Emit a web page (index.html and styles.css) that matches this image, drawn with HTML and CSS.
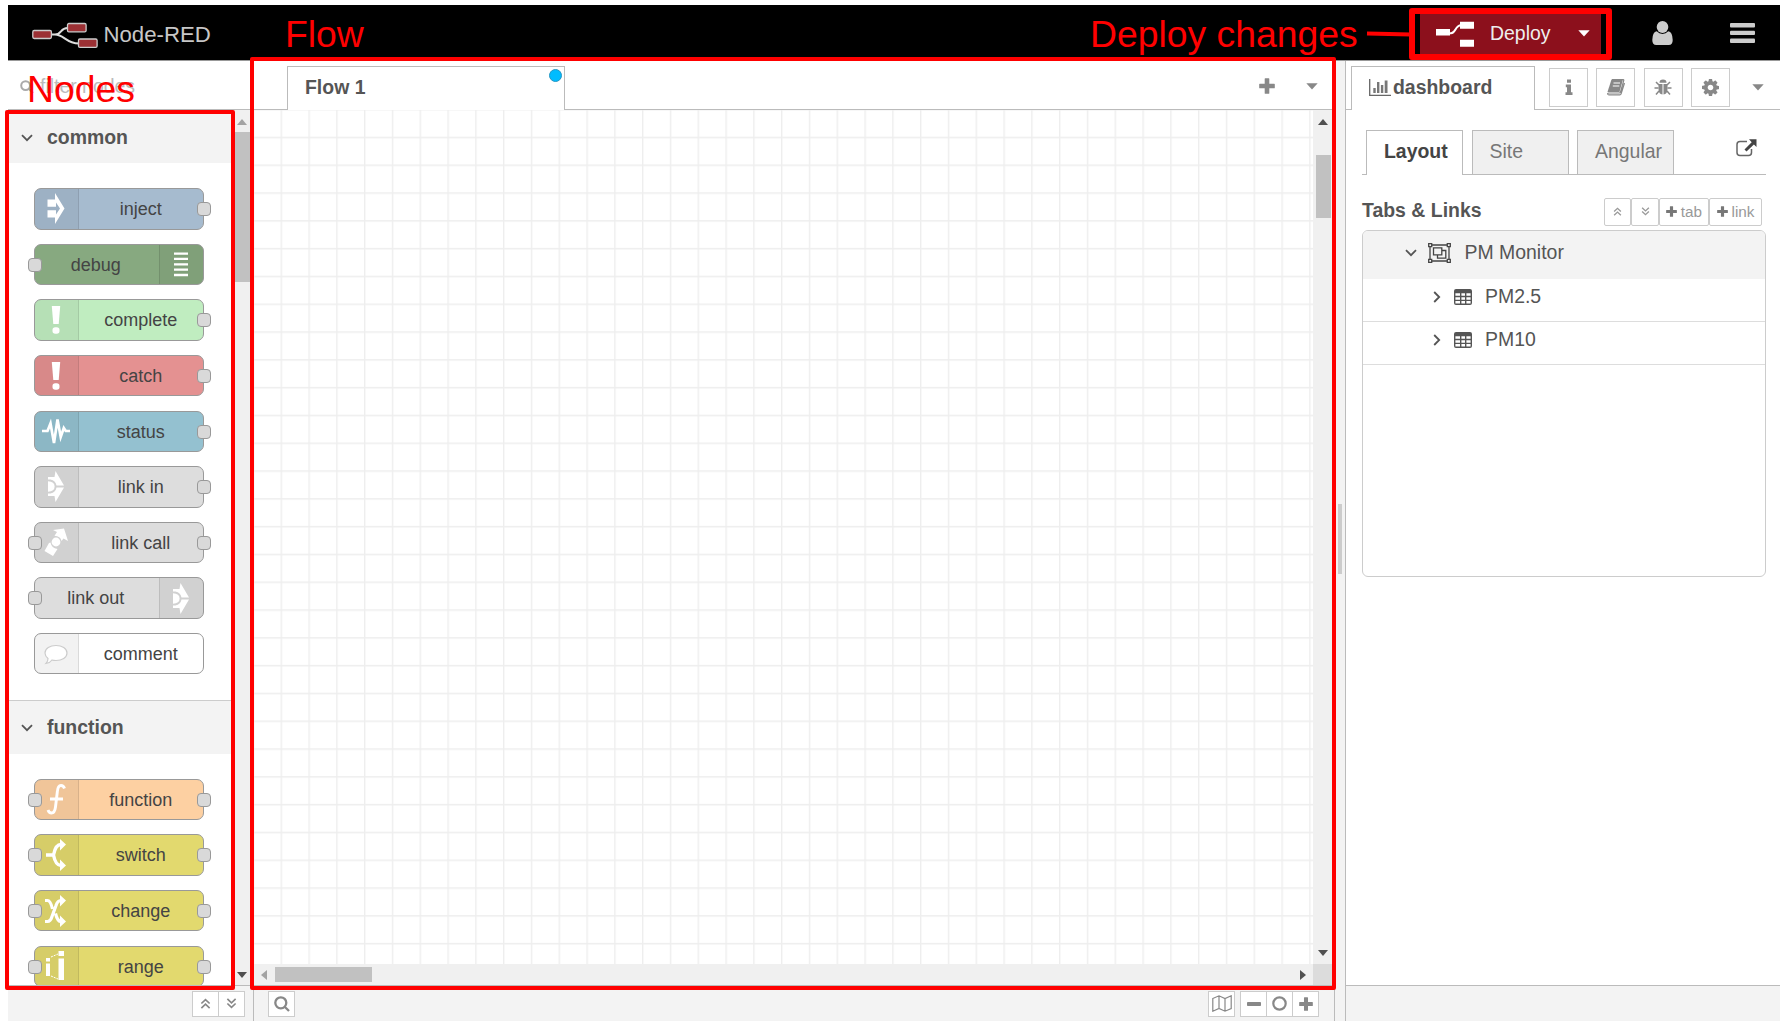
FILE: index.html
```html
<!DOCTYPE html>
<html lang="en">
<head>
<meta charset="utf-8">
<title>Node-RED</title>
<link rel="stylesheet" href="styles.css">
</head>
<body>
<svg class="defs" width="0" height="0" aria-hidden="true">
  <symbol id="down" viewBox="0 0 12 8"><path d="M1 1.2l5 5 5-5" fill="none" stroke="currentColor" stroke-width="1.8"/></symbol>
  <symbol id="right" viewBox="0 0 8 12"><path d="M1.2 1l5 5-5 5" fill="none" stroke="currentColor" stroke-width="1.8"/></symbol>
  <symbol id="up2" viewBox="0 0 12 12"><path d="M1.5 6L6 1.8 10.500 6M1.500 11L6 6.800 10.500 11" fill="none" stroke="currentColor" stroke-width="1.800"/></symbol>
  <symbol id="down2" viewBox="0 0 12 12"><path d="M1.500 1L6 5.200 10.500 1M1.500 6L6 10.200 10.500 6" fill="none" stroke="currentColor" stroke-width="1.800"/></symbol>
  <symbol id="plus" viewBox="0 0 16 16"><path d="M5.700.8q0-.6.6-.6h3.400q.6 0 .6.600v4.900h4.900q.6 0 .6.600v3.400q0 .6-.6.600h-4.900v4.900q0 .6-.6.600H6.300q-.6 0-.6-.6v-4.900H.8q-.6 0-.6-.6V6.300q0-.6.6-.6h4.900z" fill="currentColor"/></symbol>
  <symbol id="caret" viewBox="0 0 12 7"><path d="M.3.300h11.400L6 6.600z" fill="currentColor"/></symbol>
  <symbol id="table" viewBox="0 0 18 16"><path d="M2 0h14q2 0 2 2v12q0 2-2 2H2q-2 0-2-2V2q0-2 2-2zM1.400 4.300v2.500H6V4.300zm6 0v2.500H11V4.300zm5 0v2.500h4.200V4.300zM1.400 8.200v2.500H6V8.200zm6 0v2.500H11V8.200zm5 0v2.500h4.200V8.200zM1.400 12v2.500H6V12zm6 0v2.500H11V12zm5 0v2.500h4.200V12z" fill="currentColor" fill-rule="evenodd"/></symbol>
  <symbol id="bang" viewBox="0 0 10 30"><path d="M.8 1h8.400L7.700 19H2.300z" fill="#fff"/><rect x="1.500" y="22.300" width="7" height="6.500" rx="2.800" fill="#fff"/></symbol>
  <symbol id="link" viewBox="0 0 18 31"><path d="M8.500 0L17 14.600H9.500Q8.500 9.500 3.500 8.500H1V6h6.500zM17 16.400L8.500 31l-1-6H1v-2.500h2.500q5-1 6-6.100z" fill="#fff"/><path d="M1 10.200q6.600.300 6.600 5.300T1 20.800z" fill="#fff"/></symbol>
</svg>

<div class="app">
  <header class="topbar">
    <svg class="logo" width="68" height="28" viewBox="0 0 68 28">
      <path d="M20 12.500h3C30 12.500 28 6 35.500 6M23 12.500C32 12.500 34 21.500 47 21.500" fill="none" stroke="#ddd" stroke-width="2"/>
      <g fill="#9c3034" stroke="#ccc" stroke-width="1.300"><rect x=".8" y="8.500" width="18.600" height="8" rx="1.400"/><rect x="35.500" y="1.500" width="18.600" height="8.300" rx="1.400"/><rect x="46.500" y="17" width="18.600" height="8.300" rx="1.400"/></g>
    </svg>
    <span class="brand">Node-RED</span>
    <div class="deploy">
      <svg width="38" height="26" viewBox="0 0 38 26" fill="#fff"><path d="M0 8h14v6.600H0zM24 .7h14v7H24zM24 18.700h14v7H24z"/><path d="M13 12.200h2C20 12.200 19 4.200 25 4.200" fill="none" stroke="#fff" stroke-width="2"/></svg>
      <span>Deploy</span>
      <svg class="deploy-caret" width="12" height="7"><use href="#caret"/></svg>
    </div>
    <svg class="user" width="21" height="24" viewBox="0 0 21 24" fill="#ccc"><ellipse cx="10.500" cy="6" rx="5.800" ry="5.900"/><path d="M4.700 10.300q2.500 2.600 5.800 2.600t5.800-2.600Q20.500 11 20.700 19q0 5-4 5H4.300q-4 0-4-5 .2-8 4.400-8.700z"/></svg>
    <svg class="bars" width="25" height="21" viewBox="0 0 25 21" fill="#ccc"><rect width="25" height="4.400" rx="1"/><rect y="7.700" width="25" height="4.400" rx="1"/><rect y="15.500" width="25" height="4.400" rx="1"/></svg>
  </header>

  <main class="main">
    <aside class="palette">
      <div class="filter"><svg width="14" height="14" viewBox="0 0 14 14"><circle cx="5.600" cy="5.600" r="4.400" fill="none" stroke="#aaa" stroke-width="2"/><path d="M9 9l4 4" stroke="#aaa" stroke-width="2"/></svg><span>filter nodes</span></div>
      <div class="palette-body">
        <div class="palette-list">
          <div class="category"><svg width="12" height="8"><use href="#down"/></svg>common</div>
          <div class="nodes">
            <div class="node inject"><i class="ico"><svg width="18" height="31" viewBox="0 0 18 31"><path d="M8 0l9.500 15.500L8 31v-6.500H.5v-7.300H9v4.300l4-6-4-6v4.300H.5V6.500H8z" fill="#fff"/></svg></i><span>inject</span><b class="port out"></b></div>
            <div class="node debug flip"><i class="ico"><svg width="14" height="26" viewBox="0 0 14 26"><path d="M0 1.700h14M0 6.900h14M0 12.300h14M0 17.600h14M0 23h14" stroke="#fff" stroke-width="2.300"/></svg></i><span>debug</span><b class="port in"></b></div>
            <div class="node complete"><i class="ico"><svg width="10" height="30"><use href="#bang"/></svg></i><span>complete</span><b class="port out"></b></div>
            <div class="node catch"><i class="ico"><svg width="10" height="30"><use href="#bang"/></svg></i><span>catch</span><b class="port out"></b></div>
            <div class="node status"><i class="ico"><svg width="28" height="34" viewBox="0 0 28 34"><path d="M0 17h5.500l3-7.500L12 29l3.500-23.500L18.700 23l3.100-9 2 3H28" fill="none" stroke="#fff" stroke-width="2.700"/></svg></i><span>status</span><b class="port out"></b></div>
            <div class="node link"><i class="ico"><svg width="18" height="31"><use href="#link"/></svg></i><span>link in</span><b class="port out"></b></div>
            <div class="node link"><i class="ico"><svg width="26" height="30" viewBox="0 0 26 30"><path d="M10 3L21 1.500 25 14l-4.500-2.500-2 2.500q-1-5-7-5.300L14 5zM7.500 15.500q1 5.500 7 6.500L10 29 1.500 24 6 16z" fill="#fff"/><circle cx="13" cy="15" r="4.400" fill="#fff"/></svg></i><span>link call</span><b class="port in"></b><b class="port out"></b></div>
            <div class="node link flip"><i class="ico"><svg width="18" height="31"><use href="#link"/></svg></i><span>link out</span><b class="port in"></b></div>
            <div class="node comment"><i class="ico"><svg width="24" height="22" viewBox="0 0 24 22"><path d="M12 2.500c6 0 11 3 11 7.500s-5 7.500-11 7.500q-2.500 0-4-.5-2 3-6 3.500 2-2 2-5Q1 13 1 10C1 5.500 6 2.500 12 2.500z" fill="#fff" stroke="#ccc" stroke-width="1.200"/></svg></i><span>comment</span></div>
          </div>
          <div class="category second"><svg width="12" height="8"><use href="#down"/></svg>function</div>
          <div class="nodes">
            <div class="node function"><i class="ico"><svg width="20" height="31" viewBox="0 0 20 31"><path d="M18.500 4.500q-1-3-3.500-3-3.200 0-3.700 6.500L9.500 23q-.8 6-4 6Q3 29 2 26M4 15h13" fill="none" stroke="#fff" stroke-width="2.900"/></svg></i><span>function</span><b class="port in"></b><b class="port out"></b></div>
            <div class="node rule"><i class="ico"><svg width="22" height="32" viewBox="0 0 22 32"><path d="M1 16h8M8.500 16Q10.500 5.500 16 5.500M8.500 16q2 10.500 7.500 10.500" fill="none" stroke="#fff" stroke-width="3.400"/><path d="M15 0l6 5.500-6 6zM15 20.500l6 6-6 5.500z" fill="#fff"/></svg></i><span>switch</span><b class="port in"></b><b class="port out"></b></div>
            <div class="node rule"><i class="ico"><svg width="22" height="32" viewBox="0 0 22 32"><path d="M0 5.500h2.500q3 0 5 8.500M0 26.500h2.500q3 0 4.500-5l4-11q1.500-5 5-5M10.500 18.500q2 8 5.500 8" fill="none" stroke="#fff" stroke-width="3.200"/><path d="M15 0l6 5.500-6 6zM15 20.500l6 6-6 5.500z" fill="#fff"/></svg></i><span>change</span><b class="port in"></b><b class="port out"></b></div>
            <div class="node rule"><i class="ico"><svg width="19" height="30" viewBox="0 0 19 30"><path d="M0 7h4v3.500H0zM0 12.500h4V25H0zM12.500 0H18v5h-5.500zM12.500 7.500H18V29h-5.500z" fill="#fff"/><path d="M5 6l7-3M5 25l7 3" stroke="#fff" stroke-width="1" stroke-dasharray="2 1"/></svg></i><span>range</span><b class="port in"></b><b class="port out"></b></div>
          </div>
        </div>
        <div class="vscroll pale"><svg class="tri" width="10" height="6" viewBox="0 0 10 6"><path d="M0 6l5-6 5 6z" fill="#a3a3a3"/></svg><div class="thumb"></div><svg class="tri end" width="10" height="6" viewBox="0 0 10 6"><path d="M0 0h10L5 6z" fill="#505050"/></svg></div>
      </div>
      <footer class="foot palette-foot"><div class="btns"><button><svg width="11" height="11"><use href="#up2"/></svg></button><button><svg width="11" height="11"><use href="#down2"/></svg></button></div></footer>
    </aside>

    <section class="workspace">
      <div class="tabbar">
        <div class="lead"></div>
        <div class="flowtab">Flow 1<span class="dot"></span></div>
        <div class="rest"><svg width="16" height="16"><use href="#plus"/></svg><svg width="12" height="7"><use href="#caret"/></svg></div>
      </div>
      <div class="canvas-row">
        <svg class="grid" width="1059" height="854"><defs><pattern id="g" x="-1.200" y="-1.100" width="27.800" height="27.800" patternUnits="userSpaceOnUse"><path d="M.7 0v27.800M0 .7h27.800" stroke="#eee" stroke-width="1.390"/></pattern></defs><rect width="1059" height="854" fill="url(#g)"/></svg>
        <div class="vscroll flow-v"><svg class="tri" width="10" height="6" viewBox="0 0 10 6"><path d="M0 6l5-6 5 6z" fill="#505050"/></svg><div class="thumb"></div><svg class="tri end" width="10" height="6" viewBox="0 0 10 6"><path d="M0 0h10L5 6z" fill="#505050"/></svg></div>
      </div>
      <div class="hscroll"><div class="htrack"><svg width="6" height="10" viewBox="0 0 6 10"><path d="M6 0v10L0 5z" fill="#a3a3a3"/></svg><div class="hthumb"></div><svg class="hend" width="6" height="10" viewBox="0 0 6 10"><path d="M0 0v10l6-5z" fill="#505050"/></svg></div><div class="corner"></div></div>
      <footer class="foot flow-foot">
        <div class="btns"><button><svg width="16" height="16" viewBox="0 0 16 16" fill="none" stroke="currentColor" stroke-width="2.300"><circle cx="6.800" cy="6.800" r="5.500"/><path d="M10.700 10.700l4.300 4.300"/></svg></button></div>
        <div class="btns map"><button><svg width="20" height="17" viewBox="0 0 20 17" fill="none" stroke="currentColor" stroke-width="1.200"><path d="M.8 3.500L7 .8l6 2.700L19.200.8v12.700L13 16.200l-6-2.700-6.200 2.700zM7 .8v12.700M13 3.500v12.700"/></svg></button></div>
        <div class="btns"><button><svg width="14" height="4"><rect width="14" height="4" rx=".8" fill="currentColor"/></svg></button><button><svg width="15" height="15" viewBox="0 0 15 15"><circle cx="7.500" cy="7.500" r="6.200" fill="none" stroke="currentColor" stroke-width="2.200"/></svg></button><button><svg width="14" height="14"><use href="#plus"/></svg></button></div>
      </footer>
    </section>

    <div class="separator"><div class="grip"></div></div>

    <aside class="sidebar">
      <div class="tabbar">
        <div class="side-lead"></div>
        <div class="sidetab"><svg width="22" height="17" viewBox="0 0 22 17"><path d="M.7 0v16.300H22" fill="none" stroke="#666" stroke-width="1.300"/><path d="M4.300 9h2.400v5H4.300zM8 3h2.400v11H8zM11.900 6h2.400v8h-2.400zM15.700 1.500h2.800V14h-2.800z" fill="#777"/></svg><span>dashboard</span></div>
        <div class="side-rest">
          <button><svg width="8" height="16" viewBox="0 0 8 16" fill="currentColor"><path d="M2 .5h4v3.300H2zM.8 5.500H6v7.800h1.500V16H.5v-2.700H2V8.200H.8z"/></svg></button>
          <button><svg width="19" height="17" viewBox="0 0 19 17"><path d="M6 .5h11q1 .2.700 1.200L14.500 13q-.3 1-1.300 1H2.800q-1.500 0-1 1.300.3.500 1 .5h11q1 0 1.300-1L18.500 4" fill="none" stroke="currentColor" stroke-width="1.200"/><path d="M5.500.5H17L13.500 13H1.500z" fill="currentColor"/><path d="M7.500 4h6.500M6.800 7h6.500" stroke="#fff" stroke-width="1.100"/></svg></button>
          <button><svg width="18" height="17" viewBox="0 0 18 17"><path d="M5.500 3.800Q5.500.5 9 .5t3.500 3.300zM4.500 5h4v10.500Q4.500 15 4.500 10zM9.500 5h4v5q0 5-4 5.500z" fill="currentColor"/><path d="M2 3l3 3M16 3l-3 3M.5 9h4M13.500 9h4M5 12l-3 3.500M13 12l3 3.500" stroke="currentColor" stroke-width="1.500"/></svg></button>
          <button><svg width="17" height="17" viewBox="0 -128 1536 1536"><path fill="currentColor" d="M1024 640q0-106-75-181t-181-75-181 75-75 181 75 181 181 75 181-75 75-181zm512-109v222q0 12-8 23t-20 13l-185 28q-19 54-39 91 35 50 107 138 10 12 10 25t-9 23q-27 37-99 108t-94 71q-12 0-26-9l-138-108q-44 23-91 38-16 136-29 186-7 28-36 28h-222q-14 0-24.500-8.500t-11.500-21.500l-28-184q-49-16-90-37l-141 107q-10 9-25 9-14 0-25-11-126-114-165-168-7-10-7-23 0-12 8-23 15-21 51-66.500t54-70.500q-27-50-41-99l-183-27q-13-2-21-12.500t-8-23.500v-222q0-12 8-23t19-13l186-28q14-46 39-92-40-57-107-138-10-12-10-24 0-10 9-23 26-36 98.500-107.500t94.500-71.500q13 0 26 10l138 107q44-23 91-38 16-136 29-186 7-28 36-28h222q14 0 24.500 8.500t11.500 21.500l28 184q49 16 90 37l142-107q9-9 24-9 13 0 25 10 129 119 165 170 7 8 7 22 0 12-8 23-15 21-51 66.500t-54 70.500q26 50 41 98l183 28q13 2 21 12.500t8 23.500z"/></svg></button>
          <svg class="side-caret" width="12" height="7"><use href="#caret"/></svg>
        </div>
      </div>
      <div class="side-body">
        <div class="subtabs">
          <div class="subtab active">Layout</div><div class="subtab">Site</div><div class="subtab">Angular</div>
          <svg width="21" height="18" viewBox="0 0 21 18"><path d="M11 2.500H4Q1 2.500 1 5.500v8q0 3 3 3h8.500q3 0 3-3V10" fill="none" stroke="#666" stroke-width="1.500"/><path d="M13 .3h7.500V8l-2.600-2.600-7.400 7.200-2-2 7.200-7.400z" fill="#444"/></svg>
        </div>
        <div class="list-head"><h2>Tabs &amp; Links</h2>
          <div class="tools"><button><svg width="9" height="9"><use href="#up2"/></svg></button><button><svg width="9" height="9"><use href="#down2"/></svg></button><button class="wide"><svg width="11" height="11"><use href="#plus"/></svg>tab</button><button class="wide last"><svg width="11" height="11"><use href="#plus"/></svg>link</button></div>
        </div>
        <div class="tree">
          <div class="root"><svg width="12" height="8"><use href="#down"/></svg>
            <svg class="group" width="23" height="20" viewBox="0 0 23 20" fill="none" stroke="#444" stroke-width="1.300"><path d="M4 2h15M4 18h15M2 4v12M21 4v12M.7.700h3v3h-3zM19.300.7h3v3h-3zM.7 16.300h3v3h-3zM19.300 16.300h3v3h-3z"/><path d="M5.500 4.800h8.300v7H5.500zM13.800 7.500h4v7.700H9.500v-3.400"/></svg><span>PM Monitor</span></div>
          <div class="leaf"><svg width="8" height="12"><use href="#right"/></svg><svg class="tbl" width="18" height="16"><use href="#table"/></svg><span>PM2.5</span></div>
          <div class="leaf"><svg width="8" height="12"><use href="#right"/></svg><svg class="tbl" width="18" height="16"><use href="#table"/></svg><span>PM10</span></div>
        </div>
      </div>
      <footer class="foot"></footer>
    </aside>
  </main>
</div>

<div class="mark mark-nodes"></div>
<div class="mark mark-flow"></div>
<div class="mark mark-deploy"></div>
<div class="leader"></div>
<div class="note note-nodes">Nodes</div>
<div class="note note-flow">Flow</div>
<div class="note note-deploy">Deploy changes</div>
</body>
</html>
```

FILE: styles.css
```css
* { box-sizing: border-box; }
body { margin: 0; background: #fff; color: #555; font: 19.460px/1.3 "Liberation Sans", Arial, sans-serif; width: 1786px; height: 1026px; overflow: hidden; }
svg { display: block; flex: none; }
.defs { position: absolute; }
button { font: inherit; color: #888; background: #fff; border: 1px solid #ccc; padding: 0; display: flex; align-items: center; justify-content: center; }
.app { margin: 5px 6px 0 8px; height: 1016px; display: flex; flex-direction: column; }

.topbar { height: 56px; flex: none; background: #000; border-bottom: 1px solid #999; display: flex; align-items: center; padding-left: 23.500px; }
.logo { margin-top: 7px; }
.brand { color: #c7c7c7; font-size: 22.200px; margin-left: 4px; margin-top: 6px; width: 110px; white-space: nowrap; }
.deploy { width: 181px; height: 40px; margin: 2px 0 0 1206.500px; padding-left: 16px; background: #8c101c; display: flex; align-items: center; color: #eee; }
.deploy span { margin-left: 16px; width: 60px; }
.deploy-caret { margin-left: 28px; color: #fff; }
.user { margin-left: 51px; }
.bars { margin-left: 57px; margin-top: 1px; }

.main { flex: 1; display: flex; min-height: 0; }
.palette { width: 245px; flex: none; display: flex; flex-direction: column; }
.filter { height: 49px; flex: none; border-bottom: 1px solid #bbb; display: flex; align-items: center; padding: 3px 0 0 12px; gap: 6px; color: #bbb; }
.palette-body { flex: 1; min-height: 0; display: flex; }
.palette-list { width: 226.500px; overflow: hidden; }
.category { height: 53px; background: #f3f3f3; font-weight: bold; display: flex; align-items: center; gap: 14px; padding: 2px 0 0 13px; }
.category.second { height: 54px; border-top: 1px solid #ccc; }
.nodes { padding: 25.300px 0 25.300px 26.400px; display: flex; flex-direction: column; gap: 14.200px; }
.node { position: relative; width: 169.400px; height: 41.400px; flex: none; border: 1.390px solid #999; border-radius: 7px; display: flex; color: #444; font-size: 18px; }
.node .ico { width: 43.500px; background: rgba(0,0,0,.05); border-right: 1px solid rgba(0,0,0,.1); border-radius: 5px 0 0 5px; display: flex; align-items: center; justify-content: center; padding-right: 2px; }
.node span { flex: 1; text-align: center; line-height: 40px; }
.node.flip { flex-direction: row-reverse; }
.flip span { padding-right: 3px; }
.flip .ico { border-right: 0; border-left: 1px solid rgba(0,0,0,.1); border-radius: 0 5px 5px 0; }
.port { position: absolute; top: 13px; width: 13.500px; height: 14px; background: #d9d9d9; border: 1.390px solid #999; border-radius: 4px; }
.port.in { left: -7px; }
.port.out { right: -8px; }
.inject { background: #a6bbcf; }
.debug { background: #87a980; }
.complete { background: #c0edc0; }
.catch { background: #e49191; }
.status { background: #94c1d0; }
.link { background: #ddd; }
.comment { background: #fff; }
.function { background: #fdd0a2; }
.rule { background: #e2d96e; }

.vscroll { width: 15px; background: #f0f0f0; display: flex; flex-direction: column; align-items: center; padding: 9px 0 7px; }
.vscroll .thumb { width: 15px; height: 150px; background: #c1c1c1; margin-top: 6.500px; }
.vscroll .end { margin-top: auto; }
.foot { height: 36px; flex: none; background: #f3f3f3; border-top: 1px solid #bbb; display: flex; align-items: center; }
.btns { display: flex; }
.btns button { width: 27px; height: 26px; border-width: 1.400px; }
.btns button + button { margin-left: -1px; }
.palette-foot { padding-left: 183.500px; }

.workspace { width: 1082px; flex: none; border-left: 1px solid #bbb; border-right: 1px solid #bbb; display: flex; flex-direction: column; }
.tabbar { height: 49px; flex: none; display: flex; }
.lead { width: 33px; border-bottom: 1px solid #bbb; }
.flowtab { width: 278px; margin-top: 5px; border: 1px solid #bbb; border-bottom: 0; padding: 8px 0 0 17px; font-weight: bold; position: relative; }
.dot { position: absolute; right: 2px; top: 2px; width: 13px; height: 13px; border-radius: 50%; background: #00bcff; border: 1px solid #2597c4; }
.rest { flex: 1; border-bottom: 1px solid #bbb; display: flex; align-items: center; justify-content: flex-end; gap: 31px; padding: 2px 16px 0 0; color: #888; }
.canvas-row { height: 854px; display: flex; }
.flow-v { width: 21px; padding: 9px 1px 8px 0; }
.flow-v .thumb { height: 63px; margin-top: 30px; }
.hscroll { flex: 1; display: flex; }
.htrack { width: 1059px; background: #f0f0f0; display: flex; align-items: center; padding: 0 7px; }
.hthumb { width: 97px; height: 15px; background: #c1c1c1; margin-left: 8px; }
.hend { margin-left: auto; }
.corner { width: 21px; background: #dcdcdc; }
.flow-foot { padding: 0 15px 0 14px; }
.flow-foot .map { margin-left: auto; margin-right: 5px; }

.separator { width: 10px; background: #f3f3f3; display: flex; align-items: center; padding-left: 3px; }
.grip { width: 4px; height: 70px; background: #ccc; margin-bottom: 5px; }

.sidebar { flex: 1; min-width: 0; border-left: 1px solid #bbb; display: flex; flex-direction: column; }
.side-lead { width: 5px; border-bottom: 1px solid #bbb; }
.sidetab { width: 184px; margin-top: 5px; border: 1px solid #bbb; border-bottom: 0; display: flex; padding: 8px 0 0 17px; gap: 3px; font-weight: bold; }
.sidetab svg { margin-top: 4px; }
.sidetab span { margin-left: -1px; }
.side-rest { flex: 1; border-bottom: 1px solid #bbb; display: flex; padding: 6.500px 0 0 14px; gap: 8.300px; }
.side-rest button { width: 39px; height: 39px; border-width: 1.400px; }
.side-caret { margin: 16px 0 0 14px; color: #888; }
.side-body { flex: 1; padding: 19.500px 14px 0 16px; }
.subtabs { height: 45px; display: flex; align-items: flex-end; gap: 8.500px; border-bottom: 1px solid #bbb; padding-left: 4px; }
.subtab { width: 97px; height: 44px; flex: none; border: 1px solid #bbb; border-bottom: 0; background: #f0f0f0; color: #777; padding: 8px 0 0 17px; }
.subtab.active { background: #fff; color: #444; font-weight: bold; height: 45px; margin-bottom: -1px; }
.subtabs svg { margin: 0 9px 17px auto; }
.list-head { display: flex; justify-content: space-between; padding: 23px 4px 0 0; height: 55.500px; }
h2 { font-size: 19.460px; line-height: 25px; margin: 0; }
.tools { display: flex; }
.tools button { width: 27.700px; height: 28px; font-size: 15.300px; border-radius: 2px; gap: 4px; color: #999; }
.tools .wide { width: 50px; }
.tools .last { width: 53px; }
.tools .wide svg { color: #777; }
.tree { height: 347px; border: 1.400px solid #ccc; border-radius: 6px; overflow: hidden; }
.root { height: 48px; background: #f3f3f3; display: flex; align-items: center; padding: 0 0 5px 42px; }
.group { margin: 0 13.500px 0 11px; }
.leaf { height: 43px; border-bottom: 1px solid #ddd; display: flex; align-items: center; padding: 0 0 6px 70px; }
.tbl { margin: 0 13.500px 0 12.500px; }

.mark { position: absolute; border: 4px solid #f00; border-radius: 2px; }
.mark-nodes { left: 5px; top: 110px; width: 230px; height: 880px; }
.mark-flow { left: 250px; top: 57px; width: 1086px; height: 933px; }
.mark-deploy { left: 1409px; top: 8px; width: 203px; height: 52px; border-width: 6px; border-radius: 3px; }
.leader { position: absolute; left: 1367px; top: 31.500px; width: 44px; height: 4px; background: #f00; transform: rotate(1deg); }
.note { position: absolute; color: #f00; font-size: 37.330px; line-height: 42px; white-space: nowrap; }
.note-nodes { left: 27px; top: 68px; }
.note-flow { left: 285px; top: 13px; }
.note-deploy { left: 1090px; top: 13px; }
```
